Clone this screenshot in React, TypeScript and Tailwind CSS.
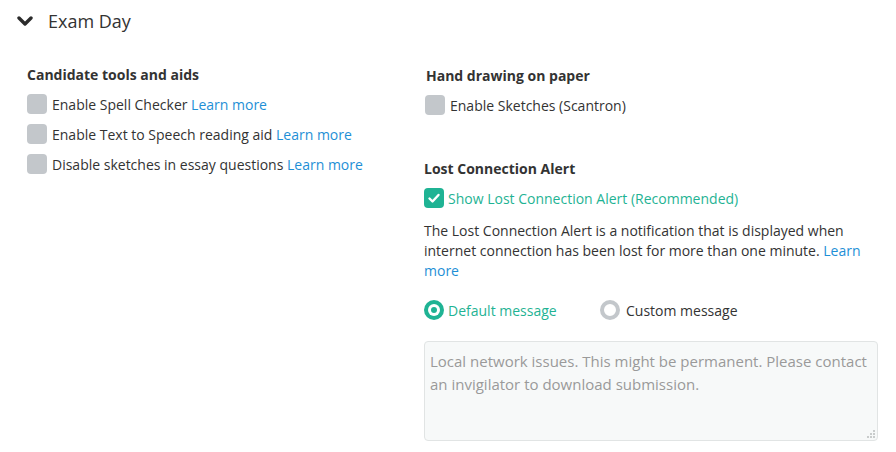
import React from "react";

function Box({ checked = false }: { checked?: boolean }) {
  return checked ? (
    <span className="flex h-5 w-5 shrink-0 items-center justify-center rounded bg-[#1fb394]">
      <svg viewBox="0 0 20 20" className="h-5 w-5">
        <path d="M5.5 10.5l3 3 6-6.5" fill="none" stroke="#fff" strokeWidth="2.4" strokeLinecap="round" strokeLinejoin="round" />
      </svg>
    </span>
  ) : (
    <span className="block h-5 w-5 shrink-0 rounded bg-[#c3c7cb]" />
  );
}

function Learn() {
  return <span className="text-[#1e8fd6]">Learn more</span>;
}

export default function App() {
  return (
    <main className="min-h-screen bg-white text-[14px] text-[#333] [font-family:'Open_Sans',sans-serif]">
      {/* header */}
      <div className="flex h-[42px] items-center pl-[17px]">
        <svg viewBox="0 0 16 12" className="h-3 w-4">
          <path d="M2 3l6 6 6-6" fill="none" stroke="#2b2b2b" strokeWidth="3.4" strokeLinecap="round" strokeLinejoin="round" />
        </svg>
        <span className="ml-[15px] text-[18px]">Exam Day</span>
      </div>

      <div className="mt-[23px] flex pr-[18px]">
        {/* left */}
        <div className="w-[424px] shrink-0 pl-[27px]">
          <h3 className="h-5 font-bold leading-5">Candidate tools and aids</h3>
          <div className="mt-1">
            <label className="flex h-[30px] items-center gap-[5px]">
              <Box />
              <span>Enable Spell Checker <Learn /></span>
            </label>
            <label className="flex h-[30px] items-center gap-[5px]">
              <Box />
              <span>Enable Text to Speech reading aid <Learn /></span>
            </label>
            <label className="flex h-[30px] items-center gap-[5px]">
              <Box />
              <span>Disable sketches in essay questions <Learn /></span>
            </label>
          </div>
        </div>

        {/* right */}
        <div className="flex-1">
          <h3 className="mt-px h-5 pl-[2px] font-bold leading-5">Hand drawing on paper</h3>
          <label className="mt-1 flex h-[30px] items-center gap-[5px] pl-px">
            <Box />
            <span>Enable Sketches (Scantron)</span>
          </label>

          <h3 className="mt-[39px] h-5 font-bold leading-5">Lost Connection Alert</h3>
          <label className="mt-1 flex h-[30px] items-center gap-[4px] text-[#1fb394]">
            <Box checked />
            <span>Show Lost Connection Alert (Recommended)</span>
          </label>
          <p className="mt-2 leading-5">
            The Lost Connection Alert is a notification that is displayed when internet connection has been lost for
            more than one minute. <Learn />
          </p>

          <div className="mt-[19px] flex h-5 items-center">
            <label className="flex w-[176px] items-center gap-[4px] text-[#1fb394]">
              <span className="flex h-5 w-5 items-center justify-center rounded-full bg-[#1fb394]">
                <span className="flex h-3 w-3 items-center justify-center rounded-full bg-white">
                  <span className="h-[6px] w-[6px] rounded-full bg-[#1fb394]" />
                </span>
              </span>
              <span>Default message</span>
            </label>
            <label className="flex items-center gap-[6px]">
              <span className="h-5 w-5 rounded-full border-4 border-[#c3c7cb] bg-white" />
              <span>Custom message</span>
            </label>
          </div>

          <div className="relative mt-[21px]">
            <textarea
              className="block h-[100px] w-full resize-none rounded border border-[#e1e4e4] bg-[#f7f9f9] px-[5px] py-2 text-[15px] leading-[23px] text-[#333] placeholder:text-[#9a9a9a] focus:outline-none"
              placeholder="Local network issues. This might be permanent. Please contact an invigilator to download submission."
            />
            {/* resize grip */}
            <svg viewBox="0 0 8 8" className="pointer-events-none absolute bottom-[3px] right-[3px] h-2 w-2">
              <rect x="6" y="0" width="2" height="2" fill="#c9cccc" />
              <rect x="3" y="3" width="2" height="2" fill="#c9cccc" />
              <rect x="6" y="3" width="2" height="2" fill="#c9cccc" />
              <rect x="0" y="6" width="2" height="2" fill="#c9cccc" />
              <rect x="3" y="6" width="2" height="2" fill="#c9cccc" />
              <rect x="6" y="6" width="2" height="2" fill="#c9cccc" />
            </svg>
          </div>
        </div>
      </div>
    </main>
  );
}
